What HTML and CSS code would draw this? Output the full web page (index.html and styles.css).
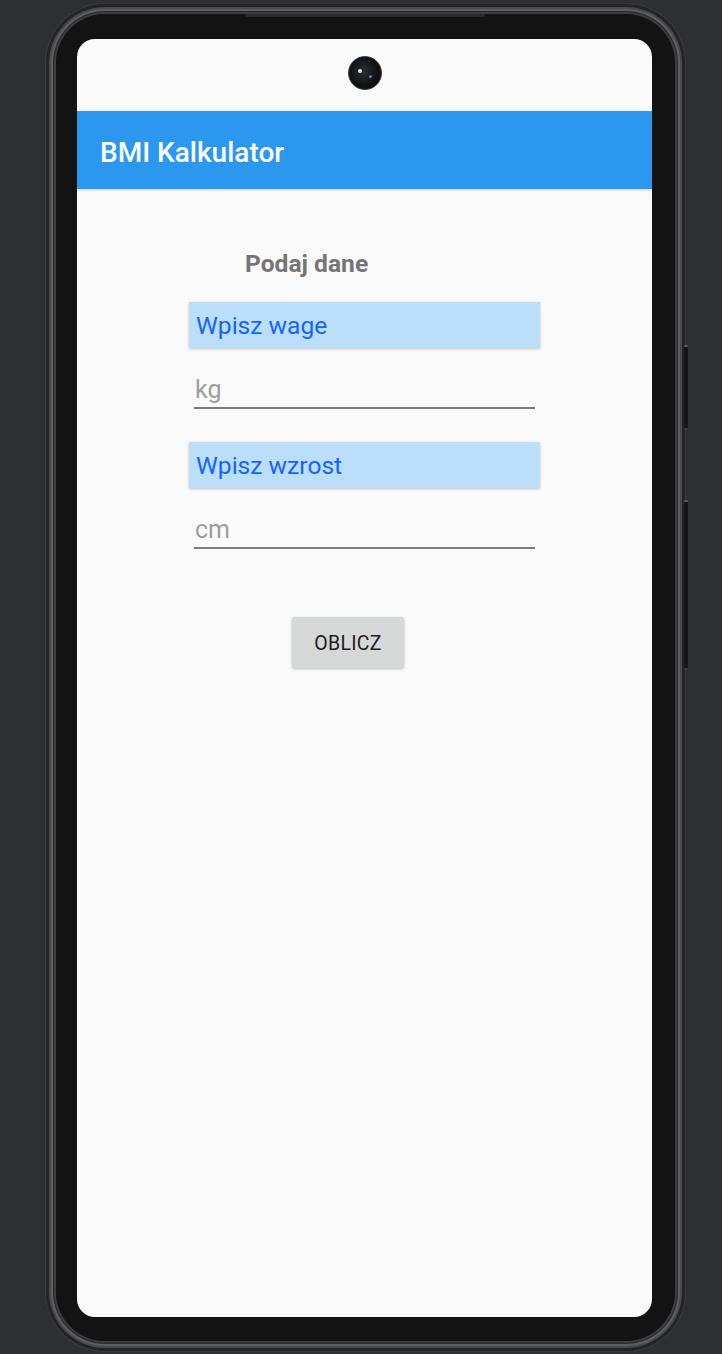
FILE: index.html
```html
<!DOCTYPE html>
<html lang="pl">
<head>
<meta charset="utf-8">
<title>BMI Kalkulator</title>
<link rel="stylesheet" href="styles.css">
</head>
<body>
<div class="phone">
  <div class="speaker"></div>
  <div class="side-btn side-btn-power"></div>
  <div class="side-btn side-btn-volume"></div>
  <div class="bezel">
    <div class="screen">
      <div class="status">
        <div class="camera"><span class="glint glint-a"></span><span class="glint glint-b"></span></div>
      </div>
      <div class="appbar">BMI Kalkulator</div>
      <div class="form">
        <div class="heading">Podaj dane</div>
        <div class="label-box">Wpisz wage</div>
        <div class="field">kg</div>
        <div class="label-box label-box-second">Wpisz wzrost</div>
        <div class="field">cm</div>
        <div class="button">OBLICZ</div>
      </div>
    </div>
  </div>
</div>
</body>
</html>
```
FILE: styles.css
```css
html, body {
  margin: 0;
  padding: 0;
}
body {
  width: 722px;
  height: 1354px;
  overflow: hidden;
  background: #2e2f32;
  font-family: Roboto, "Noto Sans", sans-serif;
}
.phone {
  position: relative;
  box-sizing: border-box;
  width: 641px;
  height: 1349px;
  margin: 3px 0 0 45px;
  padding: 11px;
  border-radius: 60px;
  background: #1c1c1e;
  box-shadow:
    inset 0 0 0 1px #3a3a3c,
    inset 0 0 0 4px #242426,
    inset 0 0 0 6px #4a4a4c,
    inset 0 0 0 8px #5e5e60,
    inset 0 0 0 9px #2b2b2d,
    inset 0 0 0 11px #3c3c3e;
}
.speaker {
  position: absolute;
  left: 200px;
  top: 11px;
  width: 240px;
  height: 3px;
  border-radius: 2px;
  background: #2a2a2c;
}
.side-btn {
  position: absolute;
  left: 639px;
  width: 4px;
  border-radius: 1px;
  background: #161617;
  border-top: 2px solid #5a5a5a;
  border-bottom: 2px solid #3a3a3a;
}
.side-btn-power {
  top: 342px;
  height: 81px;
}
.side-btn-volume {
  top: 497px;
  height: 166px;
}
.bezel {
  box-sizing: border-box;
  height: 100%;
  padding: 25px 23px 24px 21px;
  border-radius: 50px;
  background: #131314;
}
.screen {
  height: 1278px;
  border-radius: 18px;
  overflow: hidden;
  background: #fafafa;
}
.status {
  height: 72px;
  box-sizing: border-box;
  padding-top: 17px;
  display: flex;
  justify-content: center;
}
.camera {
  position: relative;
  width: 34px;
  height: 34px;
  box-sizing: border-box;
  border-radius: 50%;
  background: radial-gradient(circle at 45% 45%, #2a2e33 0%, #111214 55%, #0b0b0c 100%);
  border: 1px solid #3a3a3a;
}
.glint {
  position: absolute;
  border-radius: 50%;
}
.glint-a {
  left: 9px;
  top: 12px;
  width: 4px;
  height: 4px;
  background: #d8e6e0;
}
.glint-b {
  left: 20px;
  top: 18px;
  width: 3px;
  height: 3px;
  background: #4a86c8;
}
.appbar {
  height: 78px;
  box-sizing: border-box;
  padding: 5px 0 0 23px;
  line-height: 73px;
  background: #2b97ee;
  color: #ffffff;
  font-size: 28px;
  font-weight: 500;
  box-shadow: 0 1px 3px rgba(0, 0, 0, 0.18);
  position: relative;
}
.form {
  width: 351px;
  margin: 0 auto;
  padding-top: 61px;
}
.heading {
  margin-left: 56px;
  font-size: 24.6px;
  font-weight: 700;
  line-height: 28px;
  color: #757575;
}
.label-box {
  margin-top: 24px;
  height: 46px;
  box-sizing: border-box;
  padding: 2px 0 0 7px;
  line-height: 44px;
  font-size: 24.6px;
  color: #1764fb;
  background: #bbdefb;
  box-shadow: 0 1px 3px rgba(0, 0, 0, 0.22);
}
.label-box-second {
  margin-top: 33px;
}
.field {
  margin: 0 5px;
  padding: 27px 0 2px 1px;
  line-height: 30px;
  font-size: 25px;
  color: #9e9e9e;
  border-bottom: 2px solid #7b7b7b;
}
.button {
  width: 112px;
  height: 51px;
  box-sizing: border-box;
  margin: 68px 0 0 103px;
  padding-top: 2px;
  line-height: 49px;
  text-align: center;
  font-size: 19.5px;
  font-weight: 400;
  letter-spacing: 0.3px;
  color: #1d1d1d;
  background: #d6d7d7;
  border-radius: 3px;
  box-shadow: 0 1px 3px rgba(0, 0, 0, 0.25);
}
```
